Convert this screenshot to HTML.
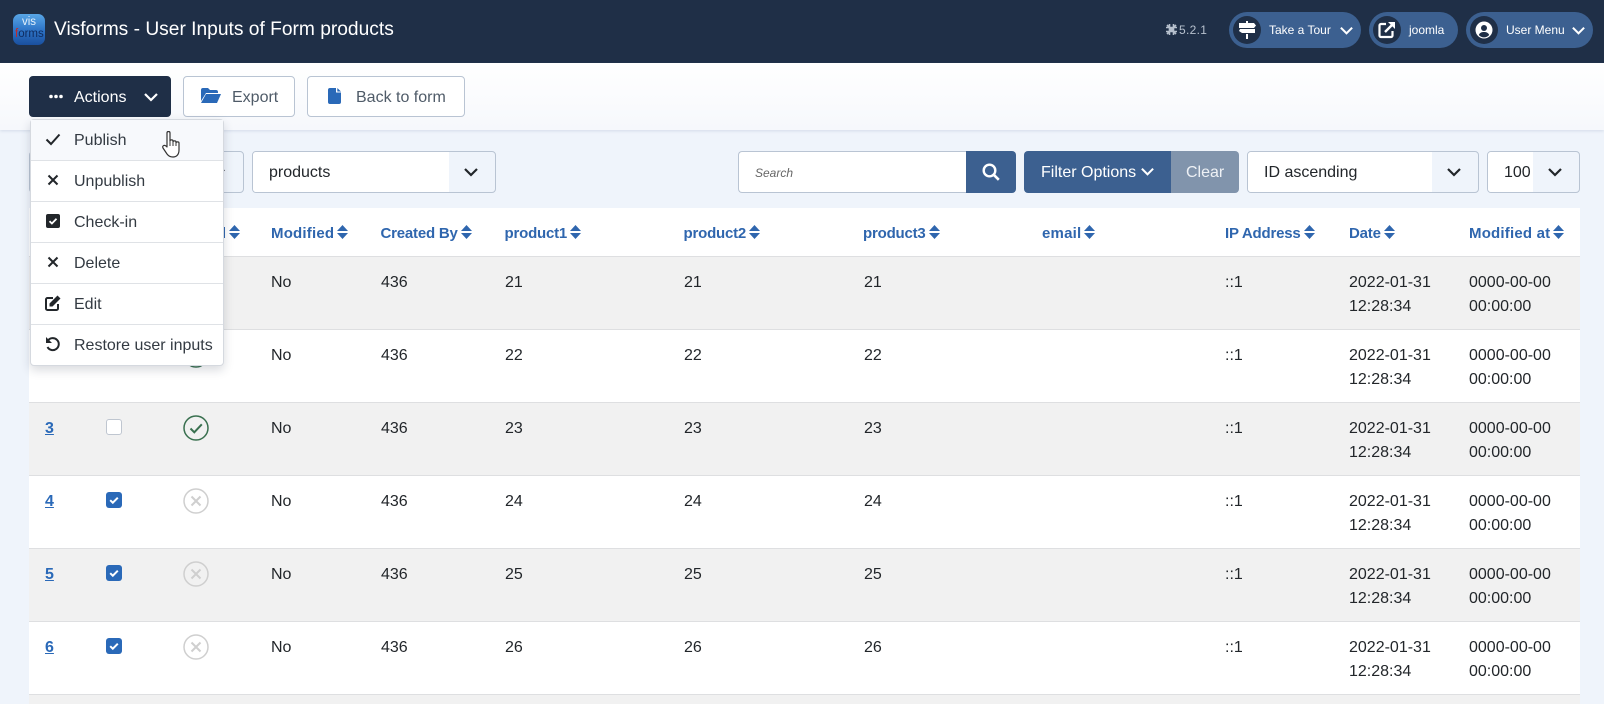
<!DOCTYPE html>
<html lang="en"><head><meta charset="utf-8"><title>Visforms</title>
<style>
*{box-sizing:border-box}
html,body{margin:0;padding:0}
body{width:1604px;height:704px;overflow:hidden;position:relative;background:#eff4fb;font-family:"Liberation Sans",Arial,sans-serif;font-size:16px;color:#22262a}
.a{position:absolute}
.t{position:absolute;white-space:nowrap;line-height:24px}
.hd{position:absolute;left:0;top:0;width:100%;height:63px;background:#1f2f47}
.tb{position:absolute;left:0;top:63px;width:100%;height:67px;background:linear-gradient(#fff,#f6f8fc);box-shadow:0 1px 3px rgba(100,120,160,.2)}
.btn{position:absolute;top:76px;height:41px;border:1px solid #b9c4d3;border-radius:4px;background:#fff;color:#4f5b68;line-height:41px}
.pill{position:absolute;top:12px;height:36px;border-radius:18px;background:#3c6090;color:#fff;font-size:12px;line-height:36px}
.circ{position:absolute;left:4px;top:4px;width:28px;height:28px;border-radius:50%;background:#1f2f47}
.sel{position:absolute;top:151px;height:42px;border:1px solid #b9c4d3;border-radius:4px;background:#eff4fb;overflow:hidden}
.sel i{position:absolute;left:0;top:0;height:40px;background:#fff;display:block}
.sel span{position:absolute;top:1px;line-height:40px;white-space:nowrap}
.row{position:absolute;left:29px;width:1551px;height:73px;border-top:1px solid #dedfe1}
.g{background:#f1f1f1}.w{background:#fff}
.th{position:absolute;top:222px;line-height:24px;color:#2f66ae;font-weight:700;font-size:15px;white-space:nowrap;letter-spacing:-.2px}
.th svg{margin-left:3px;vertical-align:-1px}
.wide{letter-spacing:.2px}
.id{left:16px;color:#2a69b8;text-decoration:underline;font-weight:700}
.dd{position:absolute;left:30px;top:119px;width:194px;height:247px;background:#fff;border:1px solid #d5d9df;border-radius:4px;box-shadow:0 4px 10px rgba(40,50,70,.18)}
.it{position:absolute;left:0;width:192px;height:41px;border-bottom:1px solid #dfe2e6;line-height:42px;color:#333a42}
.it span{position:absolute;left:43px;white-space:nowrap}
.it svg{position:absolute;left:14px;top:11px}
.r{position:absolute;top:13.5px;line-height:24px;white-space:nowrap}
</style></head><body>

<svg width="0" height="0" style="position:absolute"><defs>
<symbol id="sort" viewBox="0 0 11 14"><path d="M5.500 0 11 6H0zM5.500 14 0 8h11z" fill="#2f66ae"/></symbol>
<symbol id="chev" viewBox="0 0 16 16"><path d="M2 5l6 6 6-6" fill="none" stroke="currentColor" stroke-width="2.200"/></symbol>
<symbol id="ok" viewBox="0 0 26 26"><circle cx="13" cy="13" r="12" fill="none" stroke="#39704f" stroke-width="1.500"/><path d="M7.500 13.500l3.800 3.800 7.500-8" fill="none" stroke="#39704f" stroke-width="2"/></symbol>
<symbol id="no" viewBox="0 0 26 26"><circle cx="13" cy="13" r="12" fill="none" stroke="#cfcfcf" stroke-width="1.500"/><path d="M8.500 8.500l9 9M17.500 8.500l-9 9" fill="none" stroke="#cfcfcf" stroke-width="2"/></symbol>
<symbol id="cb" viewBox="0 0 16 16"><rect width="16" height="16" rx="3" fill="#2a69b8"/><path d="M4.200 8.200l2.600 2.500 5-5" fill="none" stroke="#fff" stroke-width="2"/></symbol>
<symbol id="x" viewBox="0 0 16 16"><path d="M3.500 3.500l9 9M12.500 3.500l-9 9" fill="none" stroke="#22262a" stroke-width="2"/></symbol>
</defs></svg>

<div class="hd"></div>
<div class="a" style="left:13px;top:14px;width:32px;height:31px;border-radius:7px;background:linear-gradient(#58a6e6,#2f76c8 50%,#1a4f9e);overflow:hidden">
  <div class="t" style="left:9px;top:2px;font-size:11.500px;line-height:13px;color:#e4f0fb">vis</div>
  <div class="t" style="left:2px;top:14px;font-size:11.500px;line-height:13px;color:#0f2c60"><span style="color:#c02a2a">f</span>orms</div>
</div>
<div class="t" style="left:54px;top:17px;font-size:19.200px;line-height:26px;color:#fff">Visforms - User Inputs of Form products</div>

<svg class="a" style="left:1165px;top:23px" width="13" height="13" viewBox="0 0 13 13"><path d="M2 2l9 9M11 2l-9 9M1 4.500h11M1 8.500h11M4.500 1v11M8.500 1v11" fill="none" stroke="#b6c0cd" stroke-width="1.600"/></svg>
<div class="t" style="left:1179px;top:18px;font-size:12px;color:#b6c0cd;letter-spacing:.3px">5.2.1</div>

<div class="pill" style="left:1229px;width:132px"><div class="circ"></div>
  <svg class="a" style="left:9px;top:9px" width="18" height="18" viewBox="0 0 18 18"><path d="M8 0h2v2h6l2 2.500L16 7H1V2h7zM2 8h15v4H4L1 10zM8 13h2v5H8z" fill="#fff"/></svg>
  <span class="a" style="left:40px;top:0;white-space:nowrap">Take a Tour</span>
  <svg class="a" style="left:110px;top:11px;color:#fff" width="15" height="15"><use href="#chev"/></svg></div>
<div class="pill" style="left:1369px;width:89px"><div class="circ"></div>
  <svg class="a" style="left:9px;top:9px" width="18" height="18" viewBox="0 0 18 18"><path d="M8 3H3a1.500 1.500 0 0 0-1.500 1.500v10A1.500 1.500 0 0 0 3 16h10a1.500 1.500 0 0 0 1.500-1.500V10" fill="none" stroke="#fff" stroke-width="2.200"/><path d="M7 11l8-8" stroke="#fff" stroke-width="2.400"/><path d="M10 1h7v7z" fill="#fff"/></svg>
  <span class="a" style="left:40px;top:0;white-space:nowrap">joomla</span></div>
<div class="pill" style="left:1466px;width:127px"><div class="circ"></div>
  <svg class="a" style="left:9px;top:9px" width="18" height="18" viewBox="0 0 18 18"><circle cx="9" cy="9" r="8.500" fill="#fff"/><circle cx="9" cy="7" r="3" fill="#1f2f47"/><path d="M3.800 14c1-2.500 3-3 5.200-3s4.200.5 5.200 3a7 7 0 0 1-10.400 0z" fill="#1f2f47"/></svg>
  <span class="a" style="left:40px;top:0;white-space:nowrap">User Menu</span>
  <svg class="a" style="left:105px;top:11px;color:#fff" width="15" height="15"><use href="#chev"/></svg></div>

<div class="tb"></div>
<div class="btn" style="left:29px;width:142px;background:#1f2f47;border-color:#1f2f47;color:#fff">
  <svg class="a" style="left:19px;top:17px" width="14" height="5" viewBox="0 0 14 5"><circle cx="2" cy="2.500" r="1.800" fill="#fff"/><circle cx="7" cy="2.500" r="1.800" fill="#fff"/><circle cx="12" cy="2.500" r="1.800" fill="#fff"/></svg>
  <span class="a" style="left:44px;top:0">Actions</span>
  <svg class="a" style="left:113px;top:12px;color:#fff" width="16" height="16"><use href="#chev"/></svg></div>
<div class="btn" style="left:183px;width:112px">
  <svg class="a" style="left:17px;top:11px" width="20" height="17" viewBox="0 0 20 17"><path d="M0 2a2 2 0 0 1 2-2h5l2 2h6a2 2 0 0 1 2 2v1H5L0 13z" fill="#2a69b8"/><path d="M5 6h15l-4 9H0z" fill="#2a69b8"/></svg>
  <span class="a" style="left:48px;top:0">Export</span></div>
<div class="btn" style="left:307px;width:158px">
  <svg class="a" style="left:20px;top:11px" width="13" height="16" viewBox="0 0 13 16"><path d="M2 0h6v4.500h5V14a2 2 0 0 1-2 2H2a2 2 0 0 1-2-2V2a2 2 0 0 1 2-2zM9.300 0 13 3.500H9.300z" fill="#2a69b8"/></svg>
  <span class="a" style="left:48px;top:0">Back to form</span></div>

<div class="sel" style="left:29px;width:215px"><i style="width:180px"></i>
  <svg class="a" style="left:181px;top:13px;color:#22262a" width="15" height="15"><use href="#chev"/></svg></div>
<div class="sel" style="left:252px;width:244px"><i style="width:196px"></i><span style="left:16px">products</span>
  <svg class="a" style="left:210px;top:12px;color:#22262a" width="16" height="16"><use href="#chev"/></svg></div>

<div class="a" style="left:738px;top:151px;width:230px;height:42px;border:1px solid #b9c4d3;border-radius:4px 0 0 4px;background:#fff;border-right:0"></div>
<div class="t" style="left:755px;top:161px;font-size:12px;font-style:italic;color:#666">Search</div>
<div class="a" style="left:966px;top:151px;width:50px;height:42px;background:#3c6090;border-radius:0 4px 4px 0"></div>
<svg class="a" style="left:982px;top:163px" width="18" height="18" viewBox="0 0 18 18"><circle cx="7.500" cy="7.500" r="5.800" fill="none" stroke="#fff" stroke-width="2.400"/><path d="M11.800 11.800l5 5" stroke="#fff" stroke-width="2.600"/></svg>
<div class="a" style="left:1024px;top:151px;width:148px;height:42px;background:#3c6090;border-radius:4px 0 0 4px;color:#fff;line-height:44px;padding-left:17px;white-space:nowrap">Filter Options</div>
<svg class="a" style="left:1140px;top:164px;color:#fff" width="15" height="15"><use href="#chev"/></svg>
<div class="a" style="left:1171px;top:151px;width:68px;height:42px;background:#8194ac;border-radius:0 4px 4px 0;color:#eef1f5;line-height:44px;padding-left:15px">Clear</div>

<div class="sel" style="left:1247px;width:232px"><i style="width:184px"></i><span style="left:16px">ID ascending</span>
  <svg class="a" style="left:198px;top:12px;color:#22262a" width="16" height="16"><use href="#chev"/></svg></div>
<div class="sel" style="left:1487px;width:93px"><i style="width:45px"></i><span style="left:16px">100</span>
  <svg class="a" style="left:59px;top:12px;color:#22262a" width="16" height="16"><use href="#chev"/></svg></div>

<div class="a w" style="left:29px;top:208px;width:1551px;height:49px"></div>
<div class="th" style="left:156px">Published<svg width="11" height="14"><use href="#sort"/></svg></div>
<div class="th wide" style="left:271px">Modified<svg width="11" height="14"><use href="#sort"/></svg></div>
<div class="th" style="left:380.500px">Created By<svg width="11" height="14"><use href="#sort"/></svg></div>
<div class="th" style="left:504.500px">product1<svg width="11" height="14"><use href="#sort"/></svg></div>
<div class="th" style="left:683.500px">product2<svg width="11" height="14"><use href="#sort"/></svg></div>
<div class="th" style="left:863px">product3<svg width="11" height="14"><use href="#sort"/></svg></div>
<div class="th wide" style="left:1042px">email<svg width="11" height="14"><use href="#sort"/></svg></div>
<div class="th" style="left:1225px">IP Address<svg width="11" height="14"><use href="#sort"/></svg></div>
<div class="th" style="left:1349px">Date<svg width="11" height="14"><use href="#sort"/></svg></div>
<div class="th wide" style="left:1469px">Modified at<svg width="11" height="14"><use href="#sort"/></svg></div>

<div class="row g" style="top:256px"><a class="r id">1</a><span class="r" style="left:242px">No</span><span class="r" style="left:352px">436</span><span class="r" style="left:476px">21</span><span class="r" style="left:655px">21</span><span class="r" style="left:835px">21</span><span class="r" style="left:1196px">::1</span><span class="r" style="left:1320px">2022-01-31<br>12:28:34</span><span class="r" style="left:1440px">0000-00-00<br>00:00:00</span></div>
<div class="row w" style="top:329px"><a class="r id">2</a><svg class="a" style="left:154px;top:12px" width="26" height="26"><use href="#ok"/></svg><span class="r" style="left:242px">No</span><span class="r" style="left:352px">436</span><span class="r" style="left:476px">22</span><span class="r" style="left:655px">22</span><span class="r" style="left:835px">22</span><span class="r" style="left:1196px">::1</span><span class="r" style="left:1320px">2022-01-31<br>12:28:34</span><span class="r" style="left:1440px">0000-00-00<br>00:00:00</span></div>
<div class="row g" style="top:402px"><a class="r id">3</a><div class="a" style="left:77px;top:16px;width:16px;height:16px;border:1px solid #bfc6d0;border-radius:3px;background:#fff"></div><svg class="a" style="left:154px;top:12px" width="26" height="26"><use href="#ok"/></svg><span class="r" style="left:242px">No</span><span class="r" style="left:352px">436</span><span class="r" style="left:476px">23</span><span class="r" style="left:655px">23</span><span class="r" style="left:835px">23</span><span class="r" style="left:1196px">::1</span><span class="r" style="left:1320px">2022-01-31<br>12:28:34</span><span class="r" style="left:1440px">0000-00-00<br>00:00:00</span></div>
<div class="row w" style="top:475px"><a class="r id">4</a><svg class="a" style="left:77px;top:16px" width="16" height="16"><use href="#cb"/></svg><svg class="a" style="left:154px;top:12px" width="26" height="26"><use href="#no"/></svg><span class="r" style="left:242px">No</span><span class="r" style="left:352px">436</span><span class="r" style="left:476px">24</span><span class="r" style="left:655px">24</span><span class="r" style="left:835px">24</span><span class="r" style="left:1196px">::1</span><span class="r" style="left:1320px">2022-01-31<br>12:28:34</span><span class="r" style="left:1440px">0000-00-00<br>00:00:00</span></div>
<div class="row g" style="top:548px"><a class="r id">5</a><svg class="a" style="left:77px;top:16px" width="16" height="16"><use href="#cb"/></svg><svg class="a" style="left:154px;top:12px" width="26" height="26"><use href="#no"/></svg><span class="r" style="left:242px">No</span><span class="r" style="left:352px">436</span><span class="r" style="left:476px">25</span><span class="r" style="left:655px">25</span><span class="r" style="left:835px">25</span><span class="r" style="left:1196px">::1</span><span class="r" style="left:1320px">2022-01-31<br>12:28:34</span><span class="r" style="left:1440px">0000-00-00<br>00:00:00</span></div>
<div class="row w" style="top:621px"><a class="r id">6</a><svg class="a" style="left:77px;top:16px" width="16" height="16"><use href="#cb"/></svg><svg class="a" style="left:154px;top:12px" width="26" height="26"><use href="#no"/></svg><span class="r" style="left:242px">No</span><span class="r" style="left:352px">436</span><span class="r" style="left:476px">26</span><span class="r" style="left:655px">26</span><span class="r" style="left:835px">26</span><span class="r" style="left:1196px">::1</span><span class="r" style="left:1320px">2022-01-31<br>12:28:34</span><span class="r" style="left:1440px">0000-00-00<br>00:00:00</span></div>
<div class="row g" style="top:694px;height:10px"></div>

<div class="dd">
  <div class="it" style="top:0;background:#f7f9fc"><svg width="16" height="16" viewBox="0 0 16 16"><path d="M1.500 8.500l4.500 4.500L14.500 3.500" fill="none" stroke="#22262a" stroke-width="2"/></svg><span>Publish</span></div>
  <div class="it" style="top:41px"><svg width="16" height="16"><use href="#x"/></svg><span>Unpublish</span></div>
  <div class="it" style="top:82px"><svg width="16" height="16" viewBox="0 0 16 16"><rect x="1" y="1" width="14" height="14" rx="2" fill="#22262a"/><path d="M4.500 8.200l2.400 2.300 4.600-4.800" fill="none" stroke="#fff" stroke-width="1.800"/></svg><span>Check-in</span></div>
  <div class="it" style="top:123px"><svg width="16" height="16"><use href="#x"/></svg><span>Delete</span></div>
  <div class="it" style="top:164px"><svg width="16" height="16" viewBox="0 0 16 16"><path d="M8 3H2.500A1.500 1.500 0 0 0 1 4.500v9A1.500 1.500 0 0 0 2.500 15h9a1.500 1.500 0 0 0 1.500-1.500V9" fill="none" stroke="#22262a" stroke-width="2"/><path d="M12.500 0.500l3 3-8 8H4.500v-3z" fill="#22262a"/></svg><span>Edit</span></div>
  <div class="it" style="top:205px;border-bottom:0"><svg width="16" height="16" viewBox="0 0 16 16"><path d="M3 4.500A6 6 0 1 1 2.500 11" fill="none" stroke="#22262a" stroke-width="2"/><path d="M1 1v6h6z" fill="#22262a"/></svg><span>Restore user inputs</span></div>
</div>

<svg class="a" style="left:162px;top:131px" width="20" height="27" viewBox="0 0 20 27"><path d="M5 2c0-2 3-2 3 0v8c0-1.500 3-1.500 3 0v1c0-1.500 3-1.500 3 0v1c0-1.500 3-1.500 3 0v7c0 4-2 7-6 7-3 0-4.500-1-6-3l-4-6c-1-2 1-3.500 3-2l1 1z" fill="#fff" stroke="#333" stroke-width="1.200" stroke-linejoin="round"/><path d="M8 10v5M11 11v4M14 12v3" stroke="#333" stroke-width="1"/></svg>

</body></html>
